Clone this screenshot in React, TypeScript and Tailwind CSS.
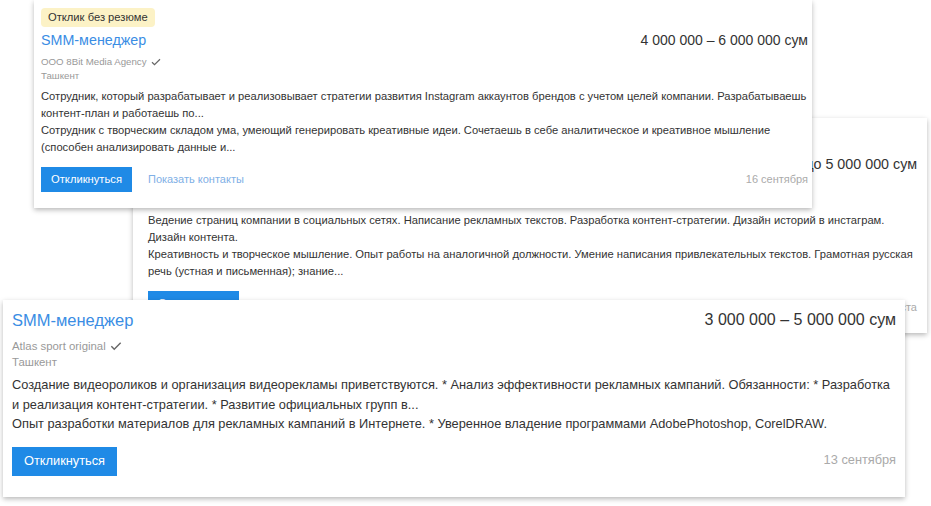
import React from "react";

type Size = {
  card: string;
  badge: string;
  title: string;
  salary: string;
  meta: string;
  desc: string;
  button: string;
  link: string;
  date: string;
  check: string;
};

const small: Size = {
  card: "pt-2 pl-[7px] pr-[4px] pb-[15px]",
  badge: "mb-[4px] px-[7px] h-[19px] text-[11.2px] leading-[19px]",
  title: "text-[14.3px] leading-[18px]",
  salary: "text-[14px] leading-[18px]",
  meta: "text-[9.7px] leading-[14px]",
  desc: "mt-[5px] text-[11.2px] leading-[17px]",
  button: "mt-[11px] h-[25px] w-[91px] text-[11.2px]",
  link: "mt-[11px] text-[11px]",
  date: "mb-[5px] text-[11px]",
  check: "h-[12px] w-[12px]",
};

const large: Size = {
  card: "pt-[10px] px-[9px] pb-[19px]",
  badge: "mb-1 px-2 h-[22px] text-[13px] leading-[22px]",
  title: "text-[16.5px] leading-[20px]",
  salary: "text-[16px] leading-[20px]",
  meta: "text-[11.4px] leading-[16px]",
  desc: "mt-[5px] text-[12.8px] leading-[19.5px]",
  button: "mt-[13px] h-[29px] w-[105px] text-[12.8px]",
  link: "mt-[13px] text-[12.8px]",
  date: "mb-[6px] text-[12.8px]",
  check: "h-[14px] w-[14px]",
};

interface VacancyProps {
  size: Size;
  badge?: string;
  company: string;
  salary: string;
  paragraphs: string[];
  date: string;
  contacts?: boolean;
  titleGap: string;
}

function Vacancy({ size, badge, company, salary, paragraphs, date, contacts, titleGap }: VacancyProps) {
  return (
    <div className={`h-full bg-white text-[#333] ${size.card}`}>
      {badge && <div className={`w-fit rounded-sm bg-[#fcf2c6] text-[#333] ${size.badge}`}>{badge}</div>}
      <div className="flex items-start justify-between">
        <a className={`text-[#3a8de4] ${size.title}`}>SMM-менеджер</a>
        <span className={`text-[#333] ${size.salary}`}>{salary}</span>
      </div>
      <div className={`${titleGap} flex items-center gap-[3px] text-[#999] ${size.meta}`}>
        {company}
        <CheckIcon className={`${size.check} text-[#666]`} />
      </div>
      <div className={`text-[#999] ${size.meta}`}>Ташкент</div>
      <div className={size.desc}>
        {paragraphs.map((p) => (
          <p key={p}>{p}</p>
        ))}
      </div>
      <div className="flex items-end justify-between">
        <div className="flex items-center">
          <button className={`bg-[#1f8ae6] text-white ${size.button}`}>Откликнуться</button>
          {contacts && <span className={`ml-4 text-[#7fb0e6] ${size.link}`}>Показать контакты</span>}
        </div>
        <span className={`text-[#aaa] ${size.date}`}>{date}</span>
      </div>
    </div>
  );
}

export default function App() {
  return (
    <div
      className="relative h-[506px] w-[931px] overflow-hidden bg-white"
      style={{ fontFamily: '"Liberation Sans", Arial, sans-serif' }}
    >
      {/* middle card, mostly covered */}
      <div className="absolute left-[133px] top-[118px] h-[215px] w-[794px] shadow-[0_2px_5px_rgba(0,0,0,0.28)]">
        <Vacancy
          size={{
            ...small,
            card: "pt-[14px] pl-[15px] pr-[10px] pb-[16px]",
            salary: "text-[14.3px] leading-[18px]",
            link: "mt-[17px] text-[11px]",
            date: "mb-[1px] text-[11px]",
          }}
          badge="Отклик без резюме"
          company="Digital Agency"
          salary="от 3 000 000 до 5 000 000 сум"
          paragraphs={[
            "Ведение страниц компании в социальных сетях. Написание рекламных текстов. Разработка контент-стратегии. Дизайн историй в инстаграм. Дизайн контента.",
            "Креативность и творческое мышление. Опыт работы на аналогичной должности. Умение написания привлекательных текстов. Грамотная русская речь (устная и письменная); знание...",
          ]}
          date="15 августа"
          contacts
          titleGap="mt-[6px]"
        />
      </div>

      {/* top card */}
      <div className="absolute left-[34px] top-0 h-[208px] w-[778px] shadow-[0_2px_5px_rgba(0,0,0,0.28)]">
        <Vacancy
          size={small}
          badge="Отклик без резюме"
          company="ООО 8Bit Media Agency"
          salary="4 000 000 – 6 000 000 сум"
          paragraphs={[
            "Сотрудник, который разрабатывает и реализовывает стратегии развития Instagram аккаунтов брендов с учетом целей компании. Разрабатываешь контент-план и работаешь по...",
            "Сотрудник с творческим складом ума, умеющий генерировать креативные идеи. Сочетаешь в себе аналитическое и креативное мышление (способен анализировать данные и...",
          ]}
          date="16 сентября"
          contacts
          titleGap="mt-[6px]"
        />
      </div>

      {/* bottom card */}
      <div className="absolute left-[3px] top-[300px] h-[197px] w-[902px] shadow-[0_2px_5px_rgba(0,0,0,0.28)]">
        <Vacancy
          size={large}
          company="Atlas sport original"
          salary="3 000 000 – 5 000 000 сум"
          paragraphs={[
            "Создание видеороликов и организация видеорекламы приветствуются. * Анализ эффективности рекламных кампаний. Обязанности: * Разработка и реализация контент-стратегии. * Развитие официальных групп в...",
            "Опыт разработки материалов для рекламных кампаний в Интернете. * Уверенное владение программами AdobePhotoshop, CorelDRAW.",
          ]}
          date="13 сентября"
          titleGap="mt-[8px]"
        />
      </div>
    </div>
  );
}

function CheckIcon({ className }: { className?: string }) {
  return (
    <svg className={className} viewBox="0 0 24 24" fill="none" stroke="currentColor" strokeWidth="2.4" aria-hidden="true">
      <path d="M4 12.5l5 5L20 6.5" />
    </svg>
  );
}
